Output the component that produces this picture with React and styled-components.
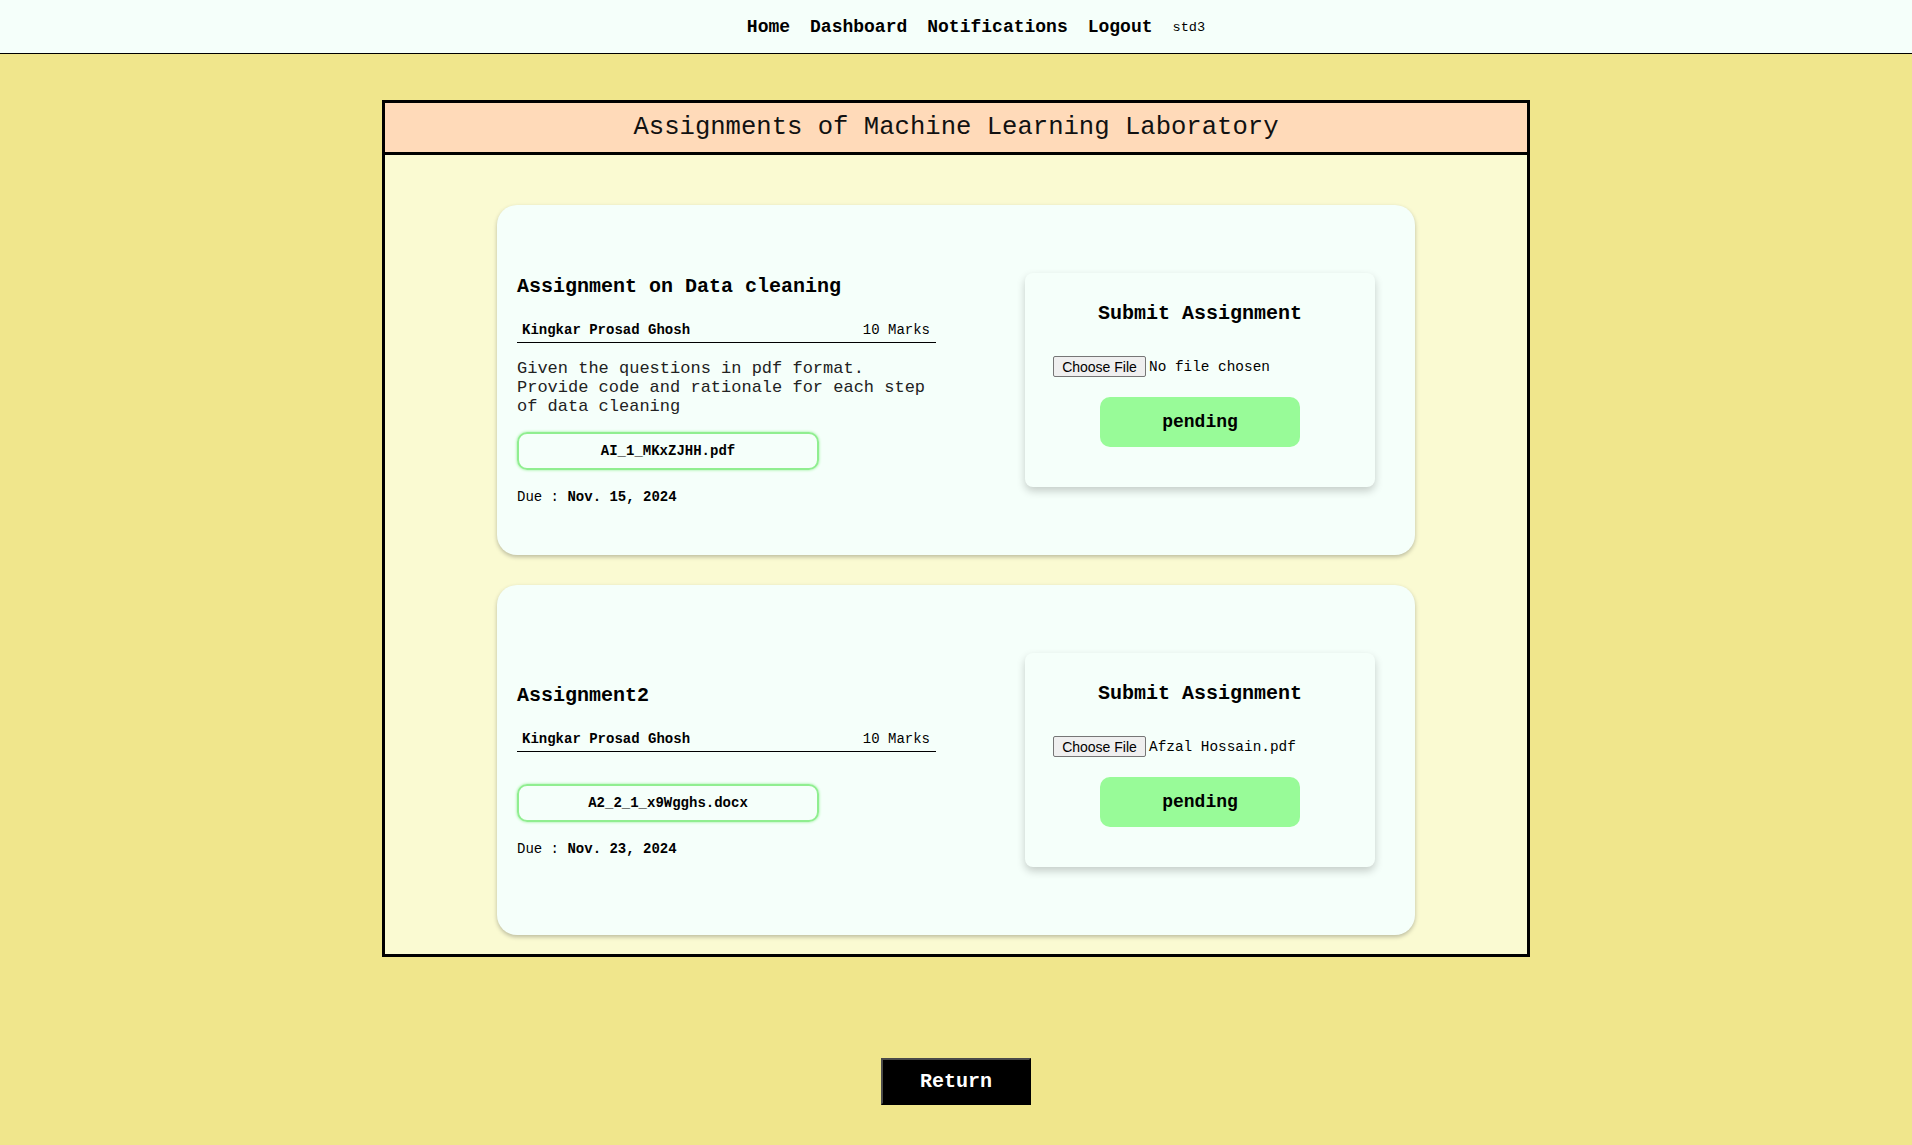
import React from 'react';
import styled, { createGlobalStyle } from 'styled-components';

const mono = `'Liberation Mono', 'Courier New', monospace`;

const GlobalStyle = createGlobalStyle`
    body {
        margin: 0;
        background: #F0E68C;
        font-family: ${mono};
        color: #000;
    }
`
const NavBar = styled.nav`
    height: 53px;
    background: #F5FFFA;
    border-bottom: 1px solid #000;
    display: flex;
    justify-content: center;
    align-items: center;
`
const NavList = styled.ul`
    display: flex;
    align-items: center;
    gap: 20px;
    list-style: none;
    margin: 0;
    padding: 0 0 0 40px;
`
const NavLink = styled.a`
    color: #000;
    text-decoration: none;
    font-weight: bold;
    font-size: 18px;
`
const User = styled.span`
    font-size: 13.6px;
`
const Box = styled.main`
    width: 60%;
    box-sizing: border-box;
    margin: 46px auto 0 auto;
    border: 3px solid #000;
    background: #FAFAD2;
`
const Header = styled.div`
    background: #FFDAB9;
    border-bottom: 3px solid #000;
    height: 49px;
    line-height: 49px;
    text-align: center;
`
const Heading = styled.h1`
    margin: 0;
    font-size: 25.6px;
    font-weight: normal;
    color: #111;
`
const CardList = styled.div`
    display: flex;
    flex-direction: column;
    gap: 30px;
    padding: 50px 0 19px 0;
`
const Card = styled.section`
    width: 918px;
    height: 350px;
    margin: 0 auto;
    box-sizing: border-box;
    padding: 0 40px 0 20px;
    background: #F5FFFA;
    border-radius: 20px;
    box-shadow: 0 2px 4px rgba(0,0,0,0.25);
    display: flex;
    align-items: center;
    justify-content: space-between;
`
const Info = styled.div`
    width: 419px;
    display: flex;
    flex-direction: column;
    padding-top: 20px;
`
const Title = styled.h3`
    margin: 0;
    font-size: 20px;
    line-height: 23px;
    font-weight: bold;
`
const Meta = styled.div`
    margin-top: 24px;
    display: flex;
    justify-content: space-between;
    font-size: 14px;
    line-height: 16px;
    padding: 0 6px 4px 5px;
    border-bottom: 1.5px solid #000;
`
const Teacher = styled.span`
    font-weight: bold;
`
const Desc = styled.p`
    margin: 16px 0;
    font-size: 17px;
    line-height: 19.2px;
    color: #222;
`
const FileLink = styled.a`
    width: 302px;
    height: 38px;
    box-sizing: border-box;
    border: 2px solid #90EE90;
    border-radius: 10px;
    box-shadow: 0 0 3px #90EE90;
    display: flex;
    align-items: center;
    justify-content: center;
    font-size: 14px;
    font-weight: bold;
    color: #000;
    text-decoration: none;
`
const Due = styled.p`
    margin: 19px 0 0 0;
    font-size: 14px;
    line-height: 16px;
    b { font-weight: bold; }
`
const Submit = styled.form`
    width: 350px;
    box-sizing: border-box;
    padding: 29px 28px 40px 28px;
    background: #F5FFFA;
    border-radius: 8px;
    box-shadow: 0 4px 8px rgba(0,0,0,0.2);
    display: flex;
    flex-direction: column;
`
const SubmitTitle = styled.h3`
    margin: 0;
    text-align: center;
    font-size: 20px;
    line-height: 23px;
`
const FileRow = styled.label`
    margin-top: 31px;
    height: 21px;
    display: flex;
    align-items: center;
    gap: 3px;
    input { display: none; }
`
const ChooseBtn = styled.span`
    width: 93px;
    height: 21px;
    box-sizing: border-box;
    border: 1px solid #767676;
    border-radius: 2px;
    background: #EFEFEF;
    font-family: 'Liberation Sans', Arial, sans-serif;
    font-size: 14px;
    display: flex;
    align-items: center;
    justify-content: center;
`
const FileName = styled.span`
    font-size: 14.4px;
`
const Status = styled.button`
    margin: 20px auto 0 auto;
    width: 200px;
    height: 50px;
    border: none;
    border-radius: 10px;
    background: #98FB98;
    font-family: ${mono};
    font-size: 18px;
    font-weight: bold;
    color: #000;
`
const Bottom = styled.div`
    margin-top: 101px;
    text-align: center;
`
const Return = styled.button`
    width: 150px;
    height: 47px;
    background: #000;
    color: #fff;
    border-style: solid;
    border-width: 2px;
    border-color: #4a4a4a #000 #000 #4a4a4a;
    font-family: ${mono};
    font-size: 20px;
    font-weight: bold;
`

const assignments = [
    {
        title: 'Assignment on Data cleaning',
        teacher: 'Kingkar Prosad Ghosh',
        marks: 10,
        desc: 'Given the questions in pdf format. Provide code and rationale for each step of data cleaning',
        file: 'AI_1_MKxZJHH.pdf',
        due: 'Nov. 15, 2024',
        chosen: 'No file chosen',
    },
    {
        title: 'Assignment2',
        teacher: 'Kingkar Prosad Ghosh',
        marks: 10,
        desc: '',
        file: 'A2_2_1_x9Wgghs.docx',
        due: 'Nov. 23, 2024',
        chosen: 'Afzal Hossain.pdf',
    },
];

const App = () => (
    <>
        <GlobalStyle />
        <NavBar>
            <NavList>
                <li><NavLink href="#">Home</NavLink></li>
                <li><NavLink href="#">Dashboard</NavLink></li>
                <li><NavLink href="#">Notifications</NavLink></li>
                <li><NavLink href="#">Logout</NavLink></li>
                <li><User>std3</User></li>
            </NavList>
        </NavBar>
        <Box>
            <Header>
                <Heading>Assignments of Machine Learning Laboratory</Heading>
            </Header>
            <CardList>
                {assignments.map(a => (
                    <Card key={a.title}>
                        <Info>
                            <Title>{a.title}</Title>
                            <Meta>
                                <Teacher>{a.teacher}</Teacher>
                                <span>{a.marks} Marks</span>
                            </Meta>
                            <Desc>{a.desc}</Desc>
                            <FileLink href="#">{a.file}</FileLink>
                            <Due>Due : <b>{a.due}</b></Due>
                        </Info>
                        <Submit onSubmit={e => e.preventDefault()}>
                            <SubmitTitle>Submit Assignment</SubmitTitle>
                            <FileRow>
                                <input type="file" />
                                <ChooseBtn>Choose File</ChooseBtn>
                                <FileName>{a.chosen}</FileName>
                            </FileRow>
                            <Status type="submit">pending</Status>
                        </Submit>
                    </Card>
                ))}
            </CardList>
        </Box>
        <Bottom>
            <Return>Return</Return>
        </Bottom>
    </>
);

export default App;
